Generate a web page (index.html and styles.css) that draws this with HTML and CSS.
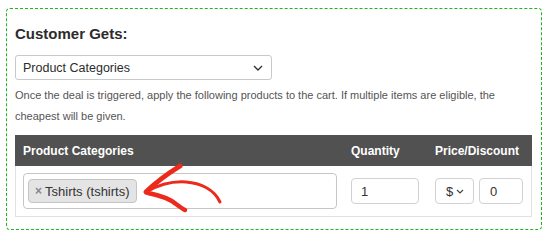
FILE: index.html
```html
<html>
	<head>
		<title>Customer Gets</title>
		<meta name="viewport" content="width=device-width, initial-scale=1">
		<link rel="stylesheet" href="styles.css">
	</head>
	<body>

		<div class="dealBox">
			<div class="dealTitle">Customer Gets:</div>

			<div class="selectBox">
				<span>Product Categories</span>
				<svg class="chevron" width="10" height="6" viewBox="0 0 10 6"><path d="M1 1 L5 5 L9 1" fill="none" stroke="#333" stroke-width="1.4"/></svg>
			</div>

			<div class="dealDesc">
				Once the deal is triggered, apply the following products to the cart. If multiple items are eligible, the cheapest will be given.
			</div>

			<div class="dealTable">
				<div class="tableHead">
					<div class="cell">Product Categories</div>
					<div class="cell">Quantity</div>
					<div class="cell">Price/Discount</div>
				</div>
				<div class="tableRow">
					<div class="cell">
						<div class="tagInput">
							<span class="tag"><span class="tagX">&times;</span>Tshirts (tshirts)</span>
						</div>
					</div>
					<div class="cell">
						<div class="field qty">1</div>
					</div>
					<div class="cell priceCell">
						<div class="field currency">
							<span>$</span>
							<svg width="8" height="5" viewBox="0 0 8 5"><path d="M1 1 L4 4 L7 1" fill="none" stroke="#444" stroke-width="1.2"/></svg>
						</div>
						<div class="field price">0</div>
					</div>
				</div>
			</div>
		</div>

		<!-- hand drawn pointer over the tag -->
		<svg class="pointer" width="550" height="245" viewBox="0 0 550 245">
			<g fill="none" stroke="#ec2a1c" stroke-linecap="round" stroke-linejoin="round">
				<path d="M146 192 C152 186 164 176 180 166" stroke-width="5"/>
				<path d="M146 192 C160 184 172 181 186 182 C200 183 214 189 220 202" stroke-width="3"/>
				<path d="M148 193 C158 195 170 199 176 204 C180 207 183 209 185 210" stroke-width="4.5"/>
			</g>
		</svg>

	</body>
</html>
```

FILE: styles.css
```css
body
{
	margin: 0;
	background-color: white;
	font-family: "Liberation Sans", Arial, sans-serif;
	color: #333;
}

.dealBox
{
	margin: 8px 0 0 6px;
	width: 517px;
	height: 220px;
	padding: 0 9px 0 8px;
	border: 1px dashed #1fb51f;
	border-radius: 4px;
}

.dealTitle
{
	margin-top: 16px;
	font-size: 15px;
	font-weight: bold;
	color: #2c2c2c;
	line-height: 18px;
}

.selectBox
{
	margin-top: 12px;
	width: 240px;
	height: 23px;
	padding: 0 8px 0 7px;
	border: 1px solid #c9c9c9;
	border-radius: 3px;
	display: flex;
	align-items: center;
	justify-content: space-between;
	font-size: 12.5px;
	color: #2c2c2c;
}

.dealDesc
{
	margin-top: 5px;
	font-size: 11px;
	line-height: 21px;
	color: #555;
}

.dealTable
{
	margin-top: 8px;
}

.tableHead, .tableRow
{
	display: grid;
	grid-template-columns: 328px 84px 1fr;
}

.tableHead
{
	height: 31px;
	background-color: #515151;
	color: white;
	font-size: 12px;
	font-weight: bold;
	align-items: center;
}

.tableHead .cell
{
	padding-left: 8px;
}

.tableRow
{
	height: 50px;
	border: 1px solid #e2e2e2;
	border-top: none;
	align-items: center;
}

.tableRow .cell
{
	padding-left: 7px;
}

.tagInput
{
	width: 304px;
	height: 34px;
	padding: 0 4px;
	border: 1px solid #c6c6c6;
	border-radius: 4px;
	display: flex;
	align-items: center;
}

.tag
{
	display: flex;
	align-items: center;
	height: 22px;
	padding: 0 6px;
	background-color: #e4e4e4;
	border: 1px solid #c4c4c4;
	border-radius: 4px;
	font-size: 13px;
	color: #333;
}

.tagX
{
	color: #888;
	font-weight: bold;
	font-size: 12px;
	margin-right: 3px;
}

.field
{
	height: 26px;
	box-sizing: border-box;
	border: 1px solid #d2d2d2;
	border-radius: 4px;
	display: flex;
	align-items: center;
	font-size: 13px;
	color: #333;
}

.qty
{
	width: 68px;
	padding-left: 9px;
}

.priceCell
{
	display: flex;
	gap: 5px;
}

.currency
{
	width: 39px;
	padding: 0 9px 0 10px;
	justify-content: space-between;
}

.price
{
	width: 44px;
	padding-left: 10px;
}

.pointer
{
	position: absolute;
	left: 0;
	top: 0;
}
```
